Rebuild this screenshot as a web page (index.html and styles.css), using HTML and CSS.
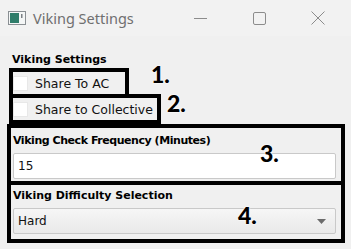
FILE: index.html
```html
<!DOCTYPE html>
<html>
<head>
<meta charset="utf-8">
<link rel="stylesheet" href="styles.css">
</head>
<body>
<div class="win">
  <div class="titlebar">
    <svg class="app-icon" width="18" height="14" viewBox="0 0 18 14">
      <rect x="0.5" y="0.5" width="17" height="13" fill="#f4f6f6" stroke="#8a8f93"/>
      <rect x="2" y="2" width="9" height="10" fill="#2f7d6a"/>
      <rect x="13" y="3" width="1.5" height="4" fill="#7a7f83"/>
    </svg>
    <span class="title">Viking Settings</span>
    <div class="controls">
      <span class="ctl"><svg width="13" height="13" viewBox="0 0 13 13"><line x1="0" y1="6.5" x2="13" y2="6.5" stroke="#8c8c8c"/></svg></span>
      <span class="ctl"><svg width="13" height="13" viewBox="0 0 13 13"><rect x="0.5" y="0.5" width="12" height="12" rx="1.5" fill="none" stroke="#8c8c8c"/></svg></span>
      <span class="ctl"><svg width="14" height="14" viewBox="0 0 14 14"><path d="M0.5 0.5 L13.5 13.5 M13.5 0.5 L0.5 13.5" stroke="#8c8c8c"/></svg></span>
    </div>
  </div>
  <div class="content">
    <div class="group-title">Viking Settings</div>
    <div class="mark mark-ac"><label class="check"><span class="box"></span>Share To AC</label></div>
    <div class="mark mark-col"><label class="check"><span class="box"></span>Share to Collective</label></div>
    <div class="mark field">
      <div class="field-label field-label-tight">Viking Check Frequency (Minutes)</div>
      <div class="input">15</div>
    </div>
    <div class="mark field field-last">
      <div class="field-label">Viking Difficulty Selection</div>
      <div class="combo"><span>Hard</span><svg width="9" height="5" viewBox="0 0 9 5"><path d="M0 0 H9 L4.5 5 Z" fill="#6b6b6b"/></svg></div>
    </div>
    <span class="anno anno-1">1.</span>
    <span class="anno anno-2">2.</span>
    <span class="anno anno-3">3.</span>
    <span class="anno anno-4">4.</span>
  </div>
</div>
</body>
</html>
```

FILE: styles.css
```css
html, body {
  margin: 0;
  padding: 0;
  background: #f0f0f0;
}
.win {
  width: 351px;
  height: 249px;
  background: #f0f0f0;
  overflow: hidden;
  font-family: "DejaVu Sans", Verdana, sans-serif;
}
.titlebar {
  height: 36px;
  display: flex;
  align-items: center;
  background: #f2f2f2;
  padding-left: 8px;
  padding-right: 4px;
}
.app-icon {
  display: block;
}
.title {
  margin-left: 7px;
  font-family: "Noto Sans", "Open Sans", sans-serif;
  font-size: 14.5px;
  color: #6f6f6f;
}
.controls {
  margin-left: auto;
  display: flex;
  align-items: center;
}
.ctl {
  width: 58.5px;
  display: flex;
  justify-content: center;
}
.ctl svg { display: block; }
.content {
  position: relative;
  padding: 15px 7px 0 7px;
}
.group-title {
  font-weight: bold;
  font-size: 11px;
  color: #000;
  padding-left: 5px;
  height: 17px;
  line-height: 17px;
}
.mark {
  border: 4px solid #000;
  box-sizing: border-box;
}
.mark-ac, .mark-col {
  margin-left: 2px;
  height: 30px;
  display: flex;
  align-items: center;
}
.mark-ac { width: 120px; }
.mark-col { width: 152px; margin-top: -4px; }
.check {
  display: flex;
  align-items: center;
  font-size: 12.5px;
  color: #111;
}
.box {
  width: 15px;
  height: 15px;
  background: #fff;
  border: 1px solid #e8e8e8;
  box-sizing: border-box;
  margin-right: 7px;
}
.field {
  width: 338px;
  padding: 4px 5px 2px 2px;
}
.field-last {
  margin-top: -4px;
  padding-top: 2px;
  padding-bottom: 5px;
}
.field-label {
  font-weight: bold;
  font-size: 11px;
  color: #000;
  height: 21px;
  line-height: 17px;
}
.field-label-tight {
  letter-spacing: -0.45px;
}
.input, .combo {
  height: 26px;
  box-sizing: border-box;
  border: 1px solid #c9c9c9;
  border-radius: 2px;
  font-size: 12px;
  color: #111;
  display: flex;
  align-items: center;
  padding-left: 4px;
}
.input {
  background: #fff;
}
.combo {
  background: linear-gradient(#f6f6f6, #e9e9e9);
  justify-content: space-between;
  padding-right: 9px;
}
.anno {
  position: absolute;
  font-family: Lato, "Liberation Sans", sans-serif;
  font-weight: 900;
  font-size: 23px;
  line-height: 1;
  color: #000;
  text-shadow: 0 0 2px #fff, 0 0 2px #fff;
}
.anno-1 { left: 151px; top: 27px; }
.anno-2 { left: 167px; top: 56px; }
.anno-3 { left: 260px; top: 106px; }
.anno-4 { left: 238px; top: 168px; }
```
